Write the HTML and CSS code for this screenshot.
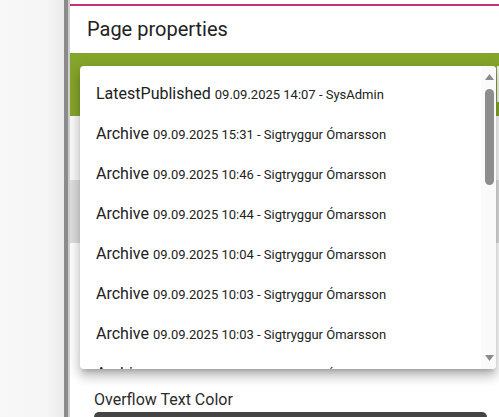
FILE: index.html
```html
<!DOCTYPE html>
<html lang="en">
<head>
<meta charset="utf-8">
<title>Page properties</title>
<link rel="stylesheet" href="styles.css">
</head>
<body>
<div class="app">
  <div class="sidebar"></div>
  <div class="divider"></div>
  <div class="divider-light"></div>
  <div class="panel">
    <div class="topline"></div>
    <div class="header">Page properties</div>
    <div class="toolbar"><div class="tool-btn"></div></div>
    <div class="row-a"></div>
    <div class="row-b"></div>
    <div class="fields">
      <div class="field-label">Overflow Text Color</div>
      <div class="field-input"></div>
    </div>

    <div class="menu">
      <div class="menu-list">
        <div class="item"><span class="state">LatestPublished</span> <span class="meta">09.09.2025 14:07 - SysAdmin</span></div>
        <div class="item"><span class="state">Archive</span> <span class="meta">09.09.2025 15:31 - Sigtryggur Ómarsson</span></div>
        <div class="item"><span class="state">Archive</span> <span class="meta">09.09.2025 10:46 - Sigtryggur Ómarsson</span></div>
        <div class="item"><span class="state">Archive</span> <span class="meta">09.09.2025 10:44 - Sigtryggur Ómarsson</span></div>
        <div class="item"><span class="state">Archive</span> <span class="meta">09.09.2025 10:04 - Sigtryggur Ómarsson</span></div>
        <div class="item"><span class="state">Archive</span> <span class="meta">09.09.2025 10:03 - Sigtryggur Ómarsson</span></div>
        <div class="item"><span class="state">Archive</span> <span class="meta">09.09.2025 10:03 - Sigtryggur Ómarsson</span></div>
        <div class="item"><span class="state">Archive</span> <span class="meta">08.09.2025 15:04 - Sigtryggur Ómarsson</span></div>
      </div>
      <div class="scrollbar">
        <svg class="arrow" width="9" height="6" viewBox="0 0 9 6"><path d="M4.5 0 L9 6 L0 6 Z" fill="#8c8c8c"/></svg>
        <div class="thumb"></div>
        <div class="track-rest"></div>
        <svg class="arrow" width="9" height="6" viewBox="0 0 9 6"><path d="M0 0 L9 0 L4.5 6 Z" fill="#8c8c8c"/></svg>
      </div>
    </div>
  </div>
</div>
</body>
</html>
```

FILE: styles.css
```css
* { box-sizing: border-box; }
html, body {
  margin: 0;
  padding: 0;
  width: 499px;
  height: 417px;
  overflow: hidden;
  font-family: Roboto, "Noto Sans", Arial, sans-serif;
  color: #212121;
  background: #f6f6f6;
}
.app {
  display: flex;
  height: 417px;
  overflow: hidden;
}
.sidebar {
  width: 64px;
  background: linear-gradient(to right, #f8f8f8 0%, #f5f5f5 75%, #ebebeb 100%);
}
.divider {
  width: 4px;
  background: #8b8b8b;
}
.divider-light {
  width: 2px;
  background: #cdcdcd;
}
.panel {
  flex: 1;
  position: relative;
  background: #fff;
  display: flex;
  flex-direction: column;
  overflow: hidden;
}
.panel > * {
  flex: none;
}
.topline {
  margin-top: 4px;
  height: 2px;
  background: #c3307c;
}
.header {
  height: 47px;
  padding: 11px 0 0 17px;
  font-size: 20px;
  line-height: 24px;
  color: #222;
}
.toolbar {
  height: 63px;
  background: #86a52b;
  display: flex;
  justify-content: flex-end;
  align-items: flex-start;
  padding-top: 13px;
}
.tool-btn {
  width: 2px;
  height: 36px;
  background: #f3f3f3;
}
.row-a {
  height: 64px;
  background: #fafafa;
}
.row-b {
  height: 63px;
  background: #dedede;
}
.fields {
  padding: 147px 12px 0 24px;
}
.field-label {
  font-size: 16px;
  line-height: 20px;
  color: #2a2a2a;
}
.field-input {
  margin-top: 2px;
  height: 30px;
  background: #454545;
  border-radius: 5px;
}
.menu {
  position: absolute;
  left: 10px;
  top: 66px;
  width: 416px;
  height: 303px;
  background: #fff;
  border-radius: 4px;
  overflow: hidden;
  display: flex;
  box-shadow: 0 5px 5px -3px rgba(0,0,0,0.2), 0 8px 10px 1px rgba(0,0,0,0.14), 0 3px 14px 2px rgba(0,0,0,0.12);
}
.menu-list {
  flex: 1;
  padding-top: 8px;
  overflow: hidden;
}
.item {
  height: 40px;
  line-height: 40px;
  padding-left: 16px;
  white-space: nowrap;
  font-size: 16px;
  color: #212121;
}
.meta {
  font-size: 13px;
  color: #222;
}
.scrollbar {
  width: 15px;
  background: #fafafa;
  display: flex;
  flex-direction: column;
  align-items: flex-start;
  padding: 8px 2px 8px 4px;
}
.arrow {
  display: block;
  flex: none;
}
.thumb {
  margin-top: 9px;
  width: 9px;
  height: 96px;
  border-radius: 5px;
  background: #8d8d8d;
  flex: none;
}
.track-rest {
  flex: 1;
}
```
